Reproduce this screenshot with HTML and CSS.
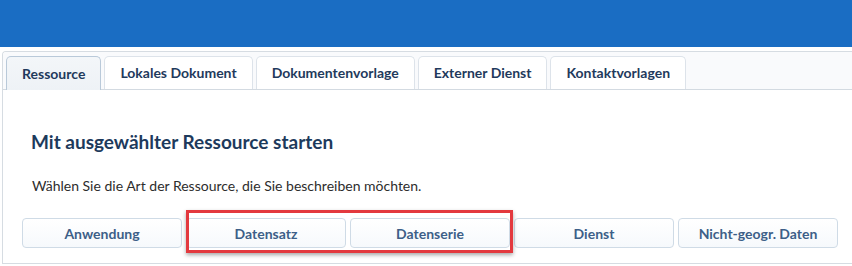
FILE: index.html
```html
<!DOCTYPE html>
<html lang="de">
<head>
<meta charset="utf-8">
<title>Ressource</title>
<link rel="stylesheet" href="styles.css">
</head>
<body>
<header class="topbar"></header>
<section class="panel">
  <nav class="tabs">
    <div class="tab active">Ressource</div>
    <div class="tab">Lokales Dokument</div>
    <div class="tab">Dokumentenvorlage</div>
    <div class="tab">Externer Dienst</div>
    <div class="tab">Kontaktvorlagen</div>
  </nav>
  <div class="content">
    <h2 class="title">Mit ausgewählter Ressource starten</h2>
    <p class="lead">Wählen Sie die Art der Ressource, die Sie beschreiben möchten.</p>
    <div class="choices">
      <button class="choice">Anwendung</button>
      <button class="choice">Datensatz</button>
      <button class="choice">Datenserie</button>
      <button class="choice">Dienst</button>
      <button class="choice">Nicht-geogr. Daten</button>
      <div class="highlight"></div>
    </div>
  </div>
</section>
</body>
</html>
```

FILE: styles.css
```css
html, body {
  margin: 0;
  padding: 0;
  background: #ffffff;
  font-family: Lato, "Open Sans", "Liberation Sans", sans-serif;
}

.topbar {
  height: 47px;
  background: #1a6dc3;
}

.panel {
  margin-top: 4px;
  margin-left: 2px;
  border: 1px solid #d6dce2;
  border-right: none;
  border-top-left-radius: 4px;
  overflow: hidden;
}

.tabs {
  display: flex;
  align-items: flex-start;
  gap: 3px;
  padding: 4px 0 0 3px;
  height: 33px;
  background: #f9fafc;
  border-bottom: 1px solid #d3dae1;
}

.tab {
  display: flex;
  align-items: center;
  height: 33px;
  box-sizing: border-box;
  padding: 0 15px 1px;
  border: 1px solid #dde3ea;
  border-bottom: none;
  border-radius: 5px 5px 0 0;
  background: #ffffff;
  color: #1f3a5c;
  font-size: 14px;
  font-weight: 700;
}

.tab.active {
  background: linear-gradient(#f3f6f9, #eef2f6);
  border-color: #b9c9d9;
  height: 34px;
  margin-bottom: -1px;
  position: relative;
}

.content {
  padding: 0 14px 15px 19px;
}

.title {
  margin: 40px 0 0 9px;
  font-size: 19px;
  line-height: 23px;
  font-weight: 700;
  color: #1d3a5c;
}

.lead {
  margin: 24px 0 0 10px;
  font-size: 14px;
  line-height: 18px;
  color: #2d2d2d;
}

.choices {
  position: relative;
  display: grid;
  grid-template-columns: repeat(5, 1fr);
  gap: 4px;
  margin-top: 23px;
}

.choice {
  height: 30px;
  border: 1px solid #cfdbe6;
  border-radius: 4px;
  background: linear-gradient(#ffffff, #f6f9fc);
  color: #3d5f88;
  font-family: Lato, "Open Sans", "Liberation Sans", sans-serif;
  font-size: 14px;
  font-weight: 700;
  padding: 0;
}

.highlight {
  position: absolute;
  left: 164px;
  top: -8px;
  width: 327px;
  height: 43px;
  box-sizing: border-box;
  border: 3px solid #e3393e;
  box-shadow: 0 2px 4px rgba(0, 0, 0, 0.35);
  pointer-events: none;
}
```
